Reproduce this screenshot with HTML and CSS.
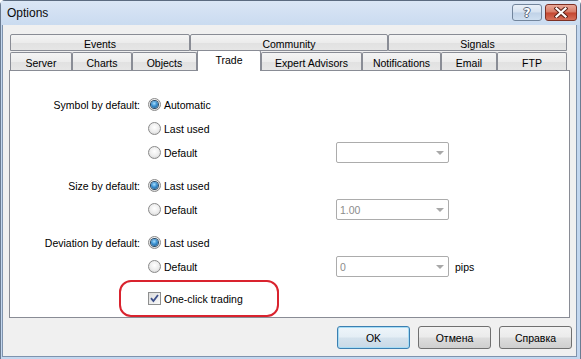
FILE: index.html
```html
<!DOCTYPE html>
<html>
<head>
<meta charset="utf-8">
<title>Options</title>
<link rel="stylesheet" href="styles.css">
</head>
<body>
<div class="window">
  <div class="titlebar">
    <span class="title">Options</span>
    <div class="caption">
      <div class="cap-btn help"><span class="qmark">?</span></div>
      <div class="cap-btn close">
        <svg width="14" height="11" viewBox="0 0 14 11">
          <path d="M2.5 1.5 L11.5 9.5 M11.5 1.5 L2.5 9.5" stroke="#5a2218" stroke-width="4.2" stroke-linecap="square"/>
          <path d="M2.5 1.5 L11.5 9.5 M11.5 1.5 L2.5 9.5" stroke="#ffffff" stroke-width="2.2" stroke-linecap="square"/>
        </svg>
      </div>
    </div>
  </div>
  <div class="client">
    <div class="tabs">
      <div class="tabrow upper">
        <div class="tab t-events">Events</div>
        <div class="tab t-community">Community</div>
        <div class="tab t-signals">Signals</div>
      </div>
      <div class="tabrow lower">
        <div class="tab t-server">Server</div>
        <div class="tab t-charts">Charts</div>
        <div class="tab t-objects">Objects</div>
        <div class="tab t-trade selected">Trade</div>
        <div class="tab t-expert">Expert Advisors</div>
        <div class="tab t-notif">Notifications</div>
        <div class="tab t-email">Email</div>
        <div class="tab t-ftp">FTP</div>
      </div>
    </div>
    <div class="panel">
      <div class="row">
        <div class="lbl">Symbol by default:</div>
        <div class="opt"><span class="radio on"></span>Automatic</div>
      </div>
      <div class="row sub">
        <div class="lbl"></div>
        <div class="opt"><span class="radio"></span>Last used</div>
      </div>
      <div class="row sub">
        <div class="lbl"></div>
        <div class="opt"><span class="radio"></span>Default</div>
        <div class="combo"><span class="val"></span><span class="arrow"></span></div>
      </div>
      <div class="row group">
        <div class="lbl">Size by default:</div>
        <div class="opt"><span class="radio on"></span>Last used</div>
      </div>
      <div class="row sub">
        <div class="lbl"></div>
        <div class="opt"><span class="radio"></span>Default</div>
        <div class="combo"><span class="val">1.00</span><span class="arrow"></span></div>
      </div>
      <div class="row group">
        <div class="lbl">Deviation by default:</div>
        <div class="opt"><span class="radio on"></span>Last used</div>
      </div>
      <div class="row sub">
        <div class="lbl"></div>
        <div class="opt"><span class="radio"></span>Default</div>
        <div class="combo"><span class="val">0</span><span class="arrow"></span></div>
        <div class="unit">pips</div>
      </div>
      <div class="row check-row">
        <div class="lbl"></div>
        <div class="opt">
          <span class="checkbox">
            <svg width="11" height="11" viewBox="0 0 11 11"><path d="M2 5.2 L4.4 8 L9 2" fill="none" stroke="#3d4f8a" stroke-width="1.8"/></svg>
          </span>One-click trading
        </div>
      </div>
      <div class="annot"></div>
    </div>
    <div class="footer">
      <button class="btn default">OK</button>
      <button class="btn">Отмена</button>
      <button class="btn">Справка</button>
    </div>
  </div>
</div>
</body>
</html>
```
FILE: styles.css
```css
* { box-sizing: border-box; }
html, body { margin: 0; padding: 0; }
body {
  width: 581px;
  height: 359px;
  overflow: hidden;
  font-family: "Liberation Sans", Arial, sans-serif;
  font-size: 10.5px;
  color: #000;
}
.window {
  width: 581px;
  height: 359px;
  background: #c3d7ef;
  border-top: 1px solid #5b6b80;
  border-left: 1px solid #6b7c92;
  border-right: 1px solid #6b7c92;
  border-radius: 5px 5px 0 0;
  display: flex;
  flex-direction: column;
}
.titlebar {
  height: 24px;
  display: flex;
  align-items: flex-start;
  background: linear-gradient(#dae6f5, #cadbf0);
}
.title {
  font-size: 12px;
  padding: 5px 0 0 6px;
  color: #0a0a0a;
}
.caption {
  margin-left: auto;
  margin-top: 3px;
  margin-right: 3px;
  display: flex;
  gap: 3px;
}
.cap-btn {
  height: 17px;
  border-radius: 3px;
  display: flex;
  align-items: center;
  justify-content: center;
}
.help {
  width: 30px;
  border: 1px solid #72859c;
  background: linear-gradient(#e9f0f8 0%, #d6e2f0 48%, #c0d2e7 52%, #cfdff0 100%);
}
.qmark {
  font-family: "DejaVu Sans", sans-serif;
  font-weight: bold;
  font-size: 12px;
  color: #fff;
  text-shadow: 1px 0 0 #56657a, -1px 0 0 #56657a, 0 1px 0 #56657a, 0 -1px 0 #56657a;
  line-height: 1;
}
.close {
  width: 32px;
  border: 1px solid #7d3024;
  background: linear-gradient(#e9a898 0%, #d77b66 48%, #c4452f 52%, #d5705a 100%);
}
.client {
  flex: 1;
  margin: 0 3px 2px 1px;
  background: #f0f0f0;
  border: 1px solid #7f93ad;
  border-top: none;
  display: flex;
  flex-direction: column;
}
.tabs {
  padding: 9px 0 0 7px;
}
.tabrow {
  display: flex;
  align-items: flex-start;
}
.tabrow.upper { height: 17px; margin-bottom: 1px; }
.tabrow.lower { height: 18px; }
.tab {
  border: 1px solid #898c95;
  border-bottom: none;
  border-radius: 2px 2px 0 0;
  background: linear-gradient(#f4f4f4 0%, #ececec 50%, #e1e1e1 52%, #e6e6e6 100%);
  text-align: center;
  height: 18px;
  line-height: 16px;
  white-space: nowrap;
}
.upper .tab { height: 17px; border-bottom: 1px solid #898c95; line-height: 16px; padding-top: 1px; }
.lower .tab { padding-top: 2px; }
.t-events { width: 180px; }
.t-community { width: 198px; }
.t-signals { width: 179px; }
.t-server { width: 62px; }
.t-charts { width: 60px; }
.t-objects { width: 65px; }
.t-trade { width: 64px; }
.t-expert { width: 101px; }
.t-notif { width: 79px; }
.t-email { width: 56px; }
.t-ftp { width: 70px; }
.tab.selected {
  background: #fff;
  height: 21px;
  margin-top: -2px;
  padding-top: 1px;
  position: relative;
  z-index: 2;
}
.panel {
  position: relative;
  margin: 0 6px 0 6px;
  height: 248px;
  background: #fff;
  border: 1px solid #898c95;
  padding-top: 23px;
}
.row {
  display: grid;
  grid-template-columns: 130px 196px 113px auto;
  height: 21px;
  align-items: center;
}
.row.sub { margin-top: 3px; }
.row.group { margin-top: 12px; }
.row.check-row { margin-top: 11px; }
.lbl { text-align: right; white-space: nowrap; }
.opt {
  display: flex;
  align-items: center;
  padding-left: 8px;
  white-space: nowrap;
}
.radio {
  width: 13px;
  height: 13px;
  border-radius: 50%;
  border: 1px solid #8a8a8a;
  background: radial-gradient(circle at 50% 40%, #ffffff 0%, #ececec 55%, #c8c8c8 100%);
  margin-right: 3px;
  display: flex;
  align-items: center;
  justify-content: center;
}
.radio.on::after {
  content: "";
  width: 7px;
  height: 7px;
  border-radius: 50%;
  background: radial-gradient(circle at 45% 35%, #a8e0ff 0%, #3a8fd0 45%, #17517f 100%);
  box-shadow: 0 0 0 1px #2a4a66;
}
.checkbox {
  width: 13px;
  height: 13px;
  border: 1px solid #8e8f8f;
  background: linear-gradient(135deg, #dcdcdc, #fafafa);
  margin-right: 3px;
  display: flex;
  align-items: center;
  justify-content: center;
}
.combo {
  height: 21px;
  border: 1px solid #acacac;
  border-radius: 2px;
  background: #fff;
  display: flex;
  align-items: center;
  justify-content: space-between;
  padding: 0 4px 0 3px;
  color: #8c8c8c;
}
.arrow {
  width: 0;
  height: 0;
  border-left: 4px solid transparent;
  border-right: 4px solid transparent;
  border-top: 4px solid #a8a8a8;
  margin-top: 1px;
}
.unit { padding-left: 6px; }
.annot {
  position: absolute;
  left: 109px;
  top: 209px;
  width: 160px;
  height: 37px;
  border: 2px solid #d9232e;
  border-radius: 12px;
}
.footer {
  display: flex;
  justify-content: flex-end;
  gap: 8px;
  padding-right: 4px;
  margin-top: 8px;
}
.btn {
  width: 73px;
  height: 23px;
  border: 1px solid #707070;
  border-radius: 3px;
  background: linear-gradient(#f2f2f2 0%, #ebebeb 48%, #dddddd 52%, #cfcfcf 100%);
  font-family: "Liberation Sans", Arial, sans-serif;
  font-size: 10.5px;
  color: #000;
  padding: 0;
}
.btn.default {
  border-color: #3c7fb1;
  box-shadow: inset 0 0 0 1px #a6dcf5;
  background: linear-gradient(#eef5fa 0%, #e4eef5 48%, #d4e2ed 52%, #c9d9e6 100%);
}
```
